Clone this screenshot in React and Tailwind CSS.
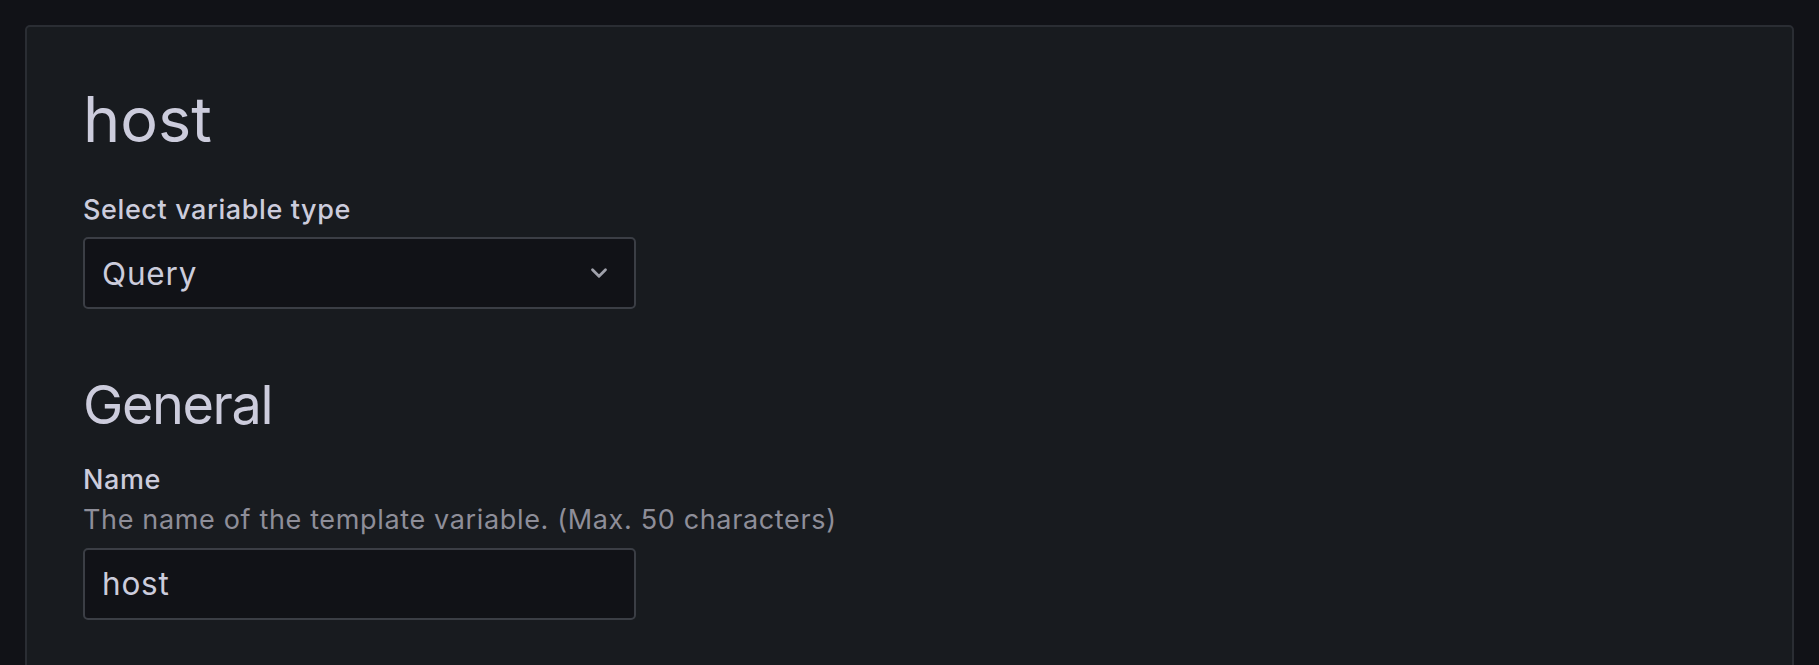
import { ChevronDown } from "lucide-react"

export default function App() {
  return (
    <div
      className="h-[665px] overflow-hidden bg-[#111217] px-[25px] pt-[25px]"
      style={{ fontFamily: "Inter, 'Noto Sans', sans-serif" }}
    >
      <div className="h-[900px] rounded-[5px] border-2 border-[#2a2d33] bg-[#181b1f] pl-[56px] pt-[55px]">
        {/* Title */}
        <h1 className="text-[63px] font-normal leading-[1.2] text-[#ccccdc]">host</h1>

        {/* Variable type */}
        <div className="mt-[35px]">
          <label className="block text-[27px] font-medium leading-[1.25] tracking-[0.6px] text-[#ccccdc]">
            Select variable type
          </label>
          <div className="mt-[11px] flex h-[72px] w-[553px] items-center justify-between rounded-[5px] border-2 border-[#3b3e45] bg-[#111217] pl-[17px] pr-[22px]">
            <span className="text-[31.5px] leading-none tracking-[0.8px] text-[#ccccdc]">Query</span>
            <ChevronDown className="h-[26px] w-[26px] text-[#a0a1ab]" strokeWidth={2.6} />
          </div>
        </div>

        {/* General */}
        <h2 className="mt-[64px] text-[54px] font-normal leading-[1.2] tracking-[-1.4px] text-[#ccccdc]">
          General
        </h2>

        <div className="mt-[25px]">
          <label className="block text-[27px] font-medium leading-[1.25] tracking-[0.6px] text-[#ccccdc]">
            Name
          </label>
          <p className="mt-[6px] text-[27px] leading-[1.25] tracking-[0.65px] text-[#8e8e99]">
            The name of the template variable. (Max. 50 characters)
          </p>
          <div className="mt-[11px] flex h-[72px] w-[553px] items-center rounded-[5px] border-2 border-[#3b3e45] bg-[#111217] pl-[17px]">
            <span className="text-[31.5px] leading-none tracking-[0.8px] text-[#ccccdc]">host</span>
          </div>
        </div>
      </div>
    </div>
  )
}
